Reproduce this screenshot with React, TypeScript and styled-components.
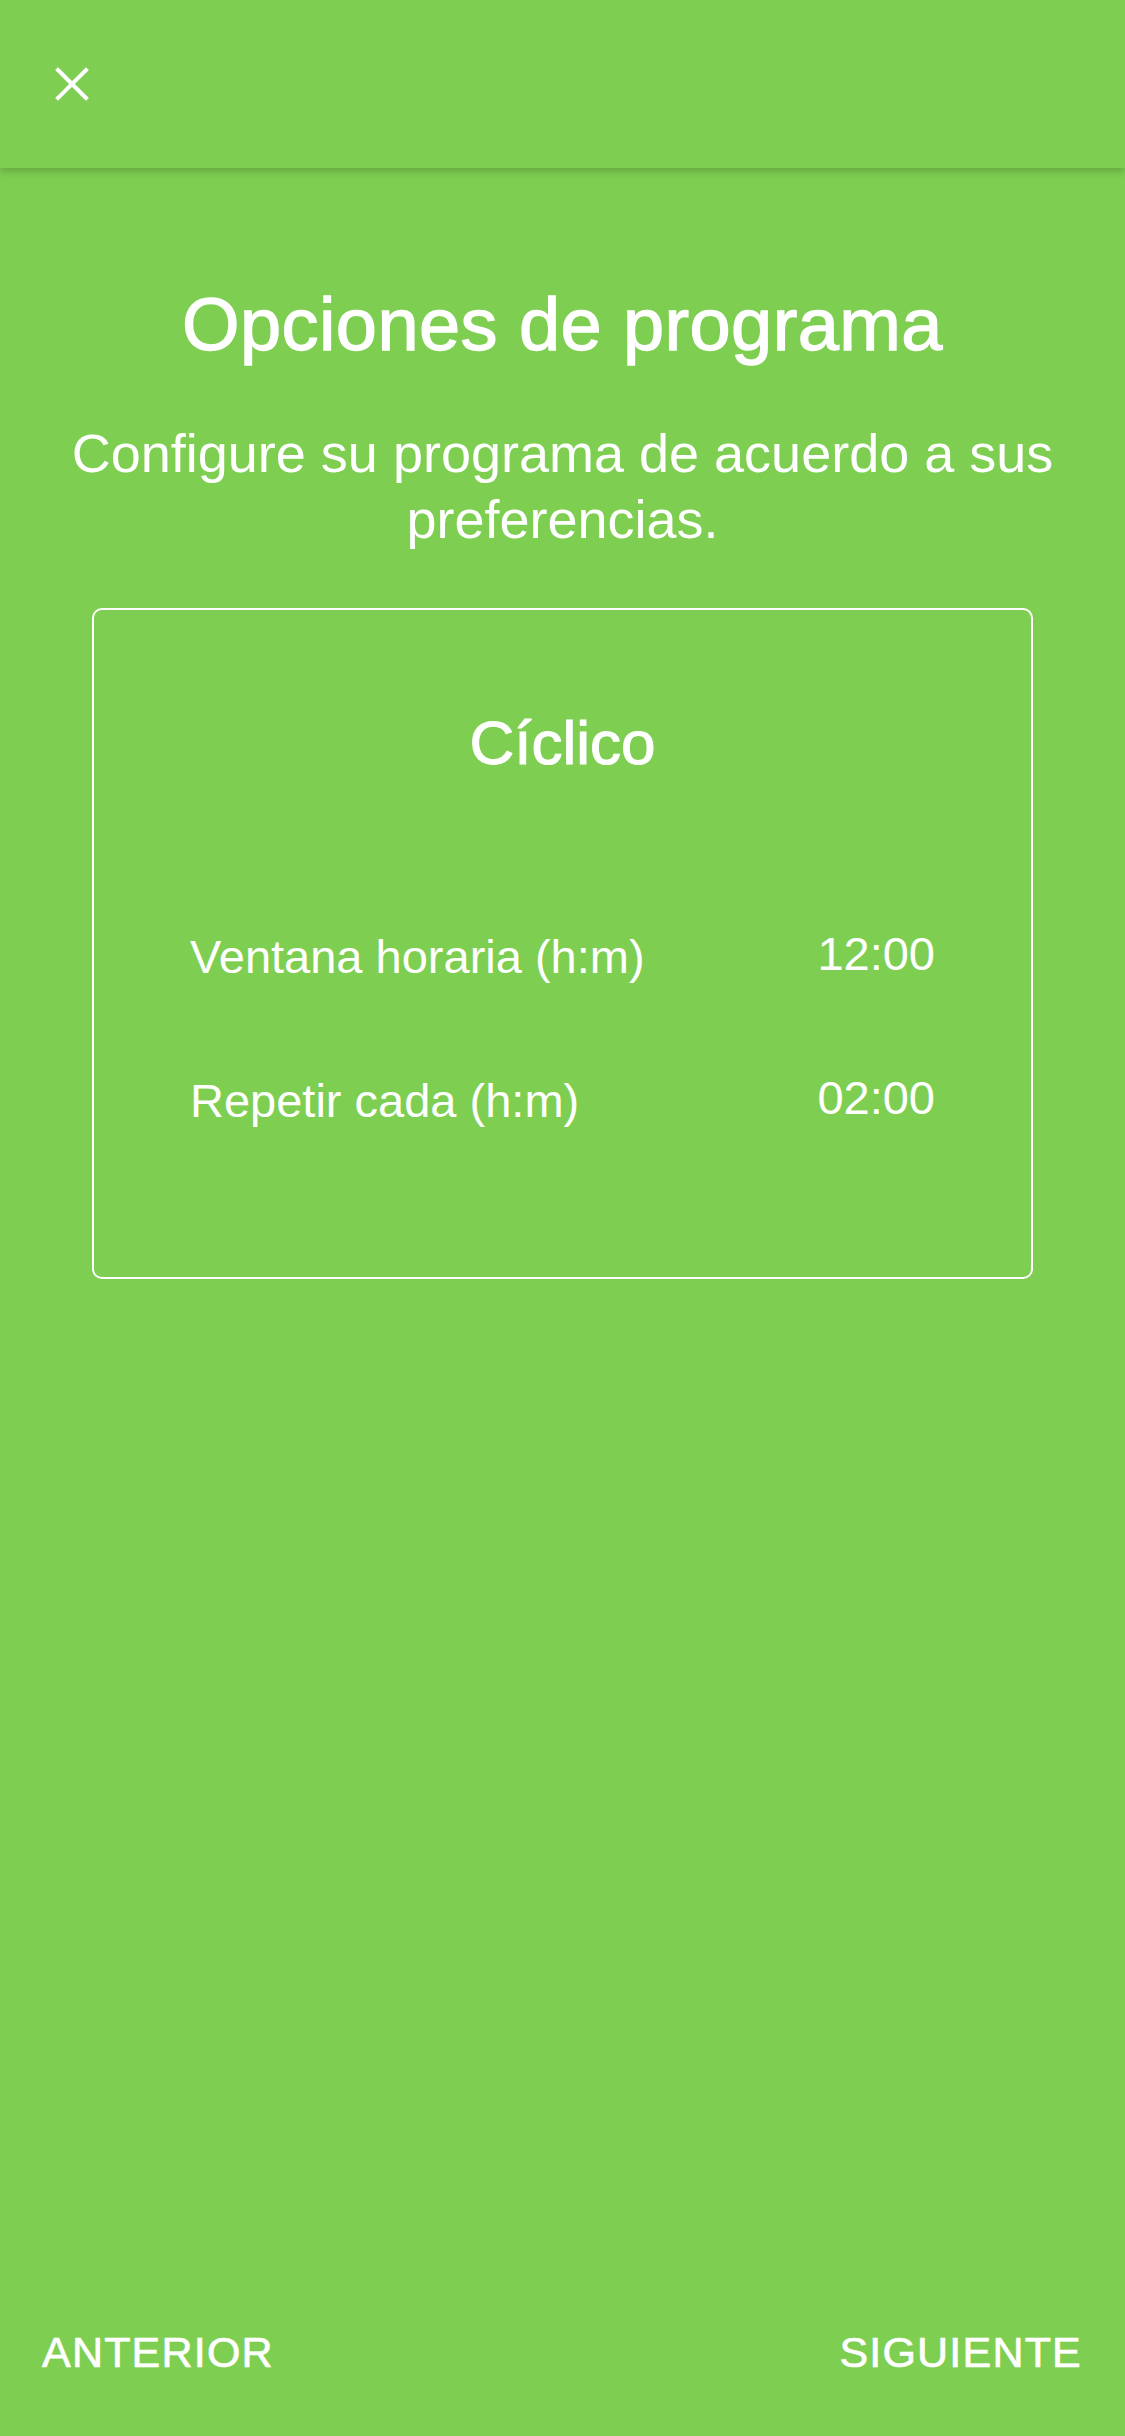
import React from "react";
import styled, { createGlobalStyle } from "styled-components";

const GlobalStyle = createGlobalStyle`
  html, body {
    margin: 0;
    padding: 0;
    background: #7ecf51;
  }
  * {
    box-sizing: border-box;
  }
`;

const Screen = styled.div`
  display: flex;
  flex-direction: column;
  min-height: 2436px;
  width: 1125px;
  background: #7ecf51;
  color: #ffffff;
  font-family: "Liberation Sans", Arial, sans-serif;
`;

const TopBar = styled.header`
  height: 168px;
  display: flex;
  align-items: center;
  padding-left: 55px;
  background: #7ecf51;
  box-shadow: 0 3px 8px rgba(0, 0, 0, 0.22);
  position: relative;
  z-index: 1;
`;

const CloseButton = styled.button`
  width: 34px;
  height: 34px;
  padding: 0;
  border: none;
  background: transparent;
  display: flex;
  cursor: pointer;
`;

const Content = styled.main`
  display: flex;
  flex-direction: column;
  align-items: center;
  padding: 115px 30px 0;
`;

// medium weight faked with a thin stroke, Liberation has no 500
const Title = styled.h1`
  margin: 0;
  font-size: 74px;
  line-height: 84px;
  font-weight: 400;
  letter-spacing: 0.4px;
  -webkit-text-stroke: 1.3px #ffffff;
  text-align: center;
`;

const Subtitle = styled.p`
  margin: 53px 0 0;
  font-size: 54px;
  line-height: 66px;
  font-weight: 400;
  text-align: center;
`;

const Card = styled.section`
  margin-top: 56px;
  width: 941px;
  border: 2px solid #ffffff;
  border-radius: 10px;
  padding: 95px 96px 148px;
  display: flex;
  flex-direction: column;
`;

const CardTitle = styled.h2`
  margin: 0;
  font-size: 62px;
  line-height: 76px;
  font-weight: 400;
  -webkit-text-stroke: 1.1px #ffffff;
  text-align: center;
`;

const Rows = styled.div`
  margin-top: 148px;
  display: flex;
  flex-direction: column;
  gap: 88px;
`;

const Row = styled.div`
  display: flex;
  justify-content: space-between;
  align-items: baseline;
  font-size: 47px;
  line-height: 56px;
`;

const Value = styled.span`
  position: relative;
  top: -3px;
`;

const Footer = styled.footer`
  margin-top: auto;
  display: flex;
  justify-content: space-between;
  padding: 0 43px 58px 42px;
`;

const NavButton = styled.button`
  padding: 0;
  border: none;
  background: transparent;
  color: #ffffff;
  font-family: "Liberation Sans", Arial, sans-serif;
  font-size: 43px;
  line-height: 52px;
  font-weight: 400;
  letter-spacing: 1.2px;
  -webkit-text-stroke: 0.7px #ffffff;
  text-transform: uppercase;
  cursor: pointer;
`;

const options = [
  { label: "Ventana horaria (h:m)", value: "12:00" },
  { label: "Repetir cada (h:m)", value: "02:00" },
];

export default function App() {
  return (
    <>
      <GlobalStyle />
      <Screen>
        <TopBar>
          <CloseButton aria-label="Cerrar">
            <svg width="34" height="34" viewBox="0 0 34 34">
              <path
                d="M3 3 L31 31 M31 3 L3 31"
                stroke="#ffffff"
                strokeWidth="4"
                strokeLinecap="square"
              />
            </svg>
          </CloseButton>
        </TopBar>
        <Content>
          <Title>Opciones de programa</Title>
          <Subtitle>
            Configure su programa de acuerdo a sus
            <br />
            preferencias.
          </Subtitle>
          <Card>
            <CardTitle>Cíclico</CardTitle>
            <Rows>
              {options.map((o) => (
                <Row key={o.label}>
                  <span>{o.label}</span>
                  <Value>{o.value}</Value>
                </Row>
              ))}
            </Rows>
          </Card>
        </Content>
        <Footer>
          <NavButton>Anterior</NavButton>
          <NavButton>Siguiente</NavButton>
        </Footer>
      </Screen>
    </>
  );
}
